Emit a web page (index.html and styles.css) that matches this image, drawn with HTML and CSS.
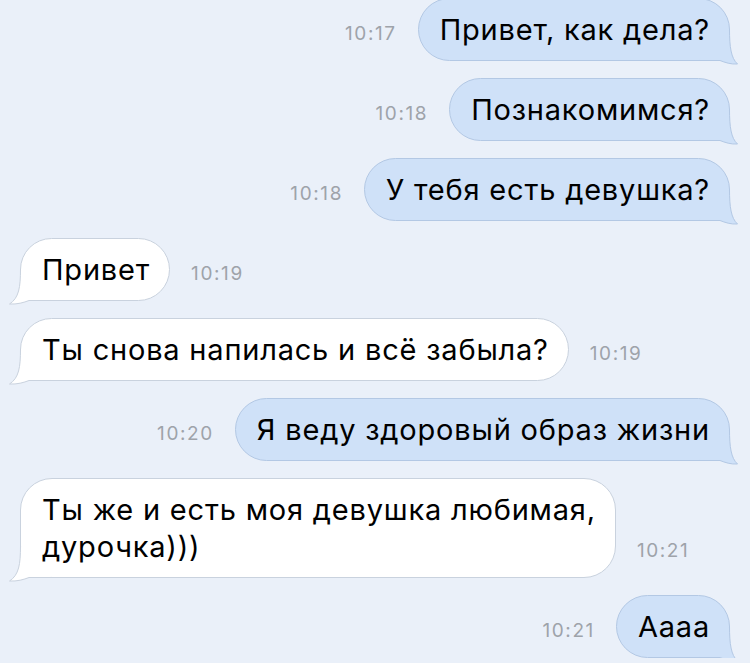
FILE: index.html
```html
<!DOCTYPE html>
<html lang="ru">
<head>
    <meta charset="UTF-8">
    <meta name="viewport" content="width=device-width, initial-scale=1.0">
    <title>Сообщения</title>
    <link rel="stylesheet" href="styles.css">
</head>
<body>
    <div class="chat">
        <div class="row out">
            <span class="time">10:17</span>
            <div class="bubble">Привет, как дела?
                <svg class="tail" viewBox="0 0 40 36"><path class="tail-fill" d="M31.5 0C31.5 18 33 29 39.5 35C33 35.5 27 33.5 22 31.5L0 31.5Z"/><path class="tail-line" d="M31.5 0C31.5 18 33 29 39.5 35C33 35.5 27 33.5 22 31.5L0 31.5"/></svg>
            </div>
        </div>
        <div class="row out">
            <span class="time">10:18</span>
            <div class="bubble">Познакомимся?
                <svg class="tail" viewBox="0 0 40 36"><path class="tail-fill" d="M31.5 0C31.5 18 33 29 39.5 35C33 35.5 27 33.5 22 31.5L0 31.5Z"/><path class="tail-line" d="M31.5 0C31.5 18 33 29 39.5 35C33 35.5 27 33.5 22 31.5L0 31.5"/></svg>
            </div>
        </div>
        <div class="row out">
            <span class="time">10:18</span>
            <div class="bubble">У тебя есть девушка?
                <svg class="tail" viewBox="0 0 40 36"><path class="tail-fill" d="M31.5 0C31.5 18 33 29 39.5 35C33 35.5 27 33.5 22 31.5L0 31.5Z"/><path class="tail-line" d="M31.5 0C31.5 18 33 29 39.5 35C33 35.5 27 33.5 22 31.5L0 31.5"/></svg>
            </div>
        </div>
        <div class="row in">
            <div class="bubble">Привет
                <svg class="tail" viewBox="0 0 43 36"><path class="tail-fill" d="M11.5 0C11.5 18 10 29 0.5 35C8 35.5 15 33.5 20 31.5L43 31.5Z"/><path class="tail-line" d="M11.5 0C11.5 18 10 29 0.5 35C8 35.5 15 33.5 20 31.5L43 31.5"/></svg>
            </div>
            <span class="time">10:19</span>
        </div>
        <div class="row in">
            <div class="bubble">Ты снова напилась и всё забыла?
                <svg class="tail" viewBox="0 0 43 36"><path class="tail-fill" d="M11.5 0C11.5 18 10 29 0.5 35C8 35.5 15 33.5 20 31.5L43 31.5Z"/><path class="tail-line" d="M11.5 0C11.5 18 10 29 0.5 35C8 35.5 15 33.5 20 31.5L43 31.5"/></svg>
            </div>
            <span class="time">10:19</span>
        </div>
        <div class="row out">
            <span class="time">10:20</span>
            <div class="bubble">Я веду здоровый образ жизни
                <svg class="tail" viewBox="0 0 40 36"><path class="tail-fill" d="M31.5 0C31.5 18 33 29 39.5 35C33 35.5 27 33.5 22 31.5L0 31.5Z"/><path class="tail-line" d="M31.5 0C31.5 18 33 29 39.5 35C33 35.5 27 33.5 22 31.5L0 31.5"/></svg>
            </div>
        </div>
        <div class="row in">
            <div class="bubble">Ты же и есть моя девушка любимая,<br>дурочка)))
                <svg class="tail" viewBox="0 0 43 36"><path class="tail-fill" d="M11.5 0C11.5 18 10 29 0.5 35C8 35.5 15 33.5 20 31.5L43 31.5Z"/><path class="tail-line" d="M11.5 0C11.5 18 10 29 0.5 35C8 35.5 15 33.5 20 31.5L43 31.5"/></svg>
            </div>
            <span class="time">10:21</span>
        </div>
        <div class="row out">
            <span class="time">10:21</span>
            <div class="bubble">Аааа
                <svg class="tail" viewBox="0 0 40 36"><path class="tail-fill" d="M31.5 0C31.5 18 33 29 39.5 35C33 35.5 27 33.5 22 31.5L0 31.5Z"/><path class="tail-line" d="M31.5 0C31.5 18 33 29 39.5 35C33 35.5 27 33.5 22 31.5L0 31.5"/></svg>
            </div>
        </div>
    </div>
</body>
</html>
```

FILE: styles.css
```css
body {
    margin: 0;
    background-color: #eaf0f9;
    font-family: Inter, "Liberation Sans", Arial, sans-serif;
    overflow: hidden;
}

.chat {
    display: flex;
    flex-direction: column;
    gap: 17px;
    margin-top: -2px;
    padding: 0 20px;
}

.row {
    display: flex;
    align-items: flex-end;
    gap: 21px;
}

.row.out {
    justify-content: flex-end;
}

.bubble {
    position: relative;
    padding: 12px 19px 12px 21px;
    border: 1px solid #c9d2de;
    border-radius: 32px;
    background-color: #ffffff;
    color: #000;
    font-size: 29px;
    letter-spacing: 0.8px;
    line-height: 37px;
}

.out .bubble {
    background-color: #cfe1f8;
    border-color: #b3c8e4;
}

.tail {
    position: absolute;
    bottom: -5px;
    width: 40px;
    height: 36px;
}

.out .tail {
    right: -9px;
}

.in .tail {
    left: -12px;
    width: 43px;
}

.tail-fill {
    fill: #ffffff;
}

.tail-line {
    fill: none;
    stroke: #c9d2de;
    stroke-width: 1;
}

.out .tail-fill {
    fill: #cfe1f8;
}

.out .tail-line {
    stroke: #b3c8e4;
}

.time {
    padding-bottom: 15px;
    color: #9ea3aa;
    font-size: 19px;
    letter-spacing: 1.6px;
    line-height: 24px;
}
```
